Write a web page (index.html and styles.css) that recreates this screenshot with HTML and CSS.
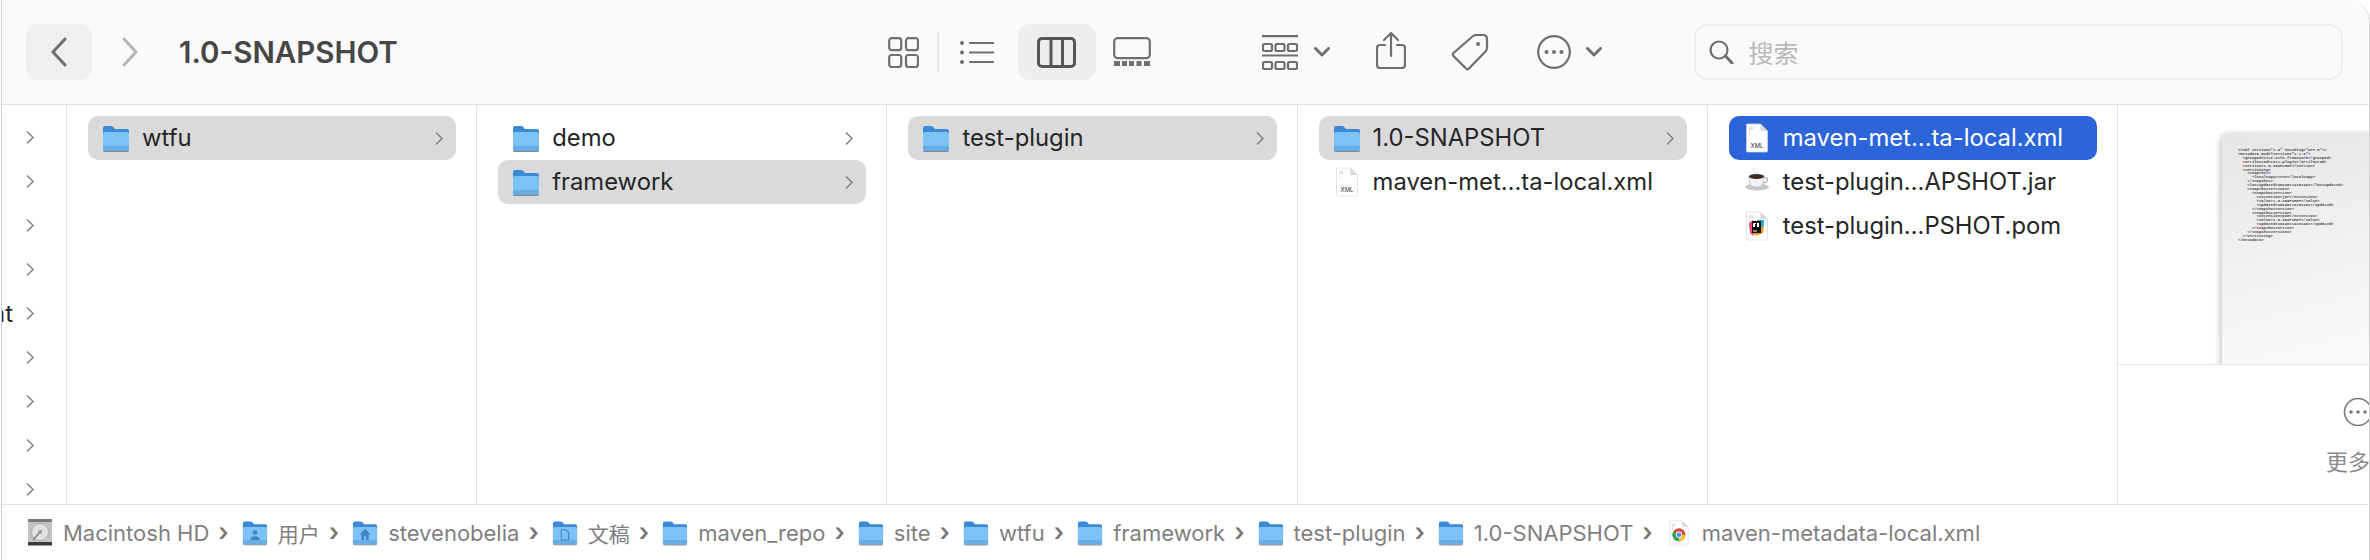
FILE: index.html
```html
<html>
  <head>
    <title>1.0-SNAPSHOT</title>
    <meta charset="UTF-8" />
    <link rel="stylesheet" href="styles.css">
  </head>
  <body>
    <svg class="sprite" width="0" height="0">
      <symbol id="folder" viewBox="0 0 28 27">
        <path d="M1 24V3q0-2 2-2h6q1.500 0 2.500 1.200l1.500 1.800h12q2 0 2 2v18z" fill="#3c8ad6"/>
        <path d="M1 9q0-2 2-2h22q2 0 2 2v15q0 2-2 2H3q-2 0-2-2z" fill="#7cc2f7"/>
        <path d="M1 21h26v3q0 2-2 2H3q-2 0-2-2z" fill="#68aee6"/>
        <path d="M3 26h22q2 0 2-1v1q0 1-2 1H3q-2 0-2-1v-1q0 1 2 1z" fill="#7d8a96"/>
      </symbol>
      <symbol id="page" viewBox="0 0 24 30">
        <path d="M1.500 1h14l7 7v20q0 1-1 1h-19q-1 0-1-1z" fill="#fff" stroke="#d6d6d6" stroke-width=".7"/>
        <path d="M15.500 1v7h7z" fill="#d8d8d8"/>
        <path d="M4 4h5l-1 1.500 1 1.500H5v5H4z" fill="#e4e4e4"/>
      </symbol>
    </svg>

    <div class="window">
      <div class="toolbar">
        <button class="nav-btn">
          <svg width="18" height="30" viewBox="0 0 18 30"><path d="M15 2 3 15l12 13" class="ln w3"/></svg>
        </button>
        <svg class="forward" width="18" height="30" viewBox="0 0 18 30"><path d="M3 2l12 13L3 28" class="ln w3 light"/></svg>
        <div class="title">1.0-SNAPSHOT</div>

        <svg class="t-grid" width="31" height="31" viewBox="0 0 31 31">
          <rect x="1.200" y="1.200" width="12" height="12" rx="2.500" class="ln w2"/>
          <rect x="18" y="1.200" width="12" height="12" rx="2.500" class="ln w2"/>
          <rect x="1.200" y="18" width="12" height="12" rx="2.500" class="ln w2"/>
          <rect x="18" y="18" width="12" height="12" rx="2.500" class="ln w2"/>
        </svg>
        <div class="t-sep"></div>
        <svg class="t-list" width="34" height="23" viewBox="0 0 34 23">
          <circle cx="2" cy="2" r="2" class="fl"/><circle cx="2" cy="11.500" r="2" class="fl"/><circle cx="2" cy="21" r="2" class="fl"/>
          <path d="M10 2h24M10 11.500h24M10 21h24" class="ln w2"/>
        </svg>
        <div class="t-active">
          <svg width="39" height="31" viewBox="0 0 39 31">
            <rect x="1.500" y="1.500" width="36" height="28" rx="3.500" class="ln w3 dark"/>
            <path d="M14 2v27M25.500 2v27" class="ln w3 dark"/>
          </svg>
        </div>
        <svg class="t-gallery" width="38" height="30" viewBox="0 0 38 30">
          <rect x="1.200" y="1.200" width="35.600" height="20" rx="3.500" class="ln w2"/>
          <path d="M1 24h6v5H1zM9 24h5v5H9zM16 24h5v5h-5zM23.500 24h5v5h-5zM31 24h6v5h-6z" class="fl"/>
        </svg>
        <svg class="t-group" width="36" height="35" viewBox="0 0 36 35">
          <path d="M0 1.200h36M0 20.500h36" class="ln w2"/>
          <rect x="1" y="9" width="9" height="7" rx="1.500" class="ln w2"/><rect x="13.500" y="9" width="9" height="7" rx="1.500" class="ln w2"/><rect x="26" y="9" width="9" height="7" rx="1.500" class="ln w2"/>
          <rect x="1" y="27" width="9" height="7" rx="1.500" class="ln w2"/><rect x="13.500" y="27" width="9" height="7" rx="1.500" class="ln w2"/><rect x="26" y="27" width="9" height="7" rx="1.500" class="ln w2"/>
        </svg>
        <svg class="t-caret" width="16" height="10" viewBox="0 0 16 10"><path d="M1.500 1.500 8 8l6.500-6.500" class="ln w3"/></svg>
        <svg class="t-share" width="30" height="37" viewBox="0 0 30 37">
          <path d="M9 13H4q-3 0-3 3v17q0 3 3 3h22q3 0 3-3V16q0-3-3-3h-5" class="ln w2"/>
          <path d="M15 24V1.500M8 8l7-7 7 7" class="ln w2"/>
        </svg>
        <svg class="t-tag" width="38" height="38" viewBox="0 0 38 38">
          <path d="M25 2h7q4 0 4 4v9q0 2-1.500 3.500L18 35.500q-1.500 1.500-3 0L2.500 23q-1.500-1.500 0-3L22 3q1.300-1 3-1z" class="ln w2"/>
          <circle cx="27" cy="11" r="2" class="fl"/>
        </svg>
        <svg class="t-more" width="34" height="34" viewBox="0 0 34 34">
          <circle cx="17" cy="17" r="15.800" class="ln w2"/>
          <circle cx="9.500" cy="17" r="2" class="fl"/><circle cx="17" cy="17" r="2" class="fl"/><circle cx="24.500" cy="17" r="2" class="fl"/>
        </svg>
        <svg class="t-caret t-caret2" width="16" height="10" viewBox="0 0 16 10"><path d="M1.500 1.500 8 8l6.500-6.500" class="ln w3"/></svg>

        <div class="search">
          <svg width="27" height="24" viewBox="0 0 27 24"><circle cx="10" cy="10" r="8.500" class="ln w2"/><path d="M16.500 16 23 23" class="ln w3"/></svg>
          <span>搜索</span>
        </div>
      </div>

      <div class="browser">
        <div class="col-side">
          <div class="side-row"><svg class="chev" width="8" height="13" viewBox="0 0 8 13"><path d="M1 .5 7 6.500 1 12.500"/></svg></div>
          <div class="side-row"><svg class="chev" width="8" height="13" viewBox="0 0 8 13"><path d="M1 .5 7 6.500 1 12.500"/></svg></div>
          <div class="side-row"><svg class="chev" width="8" height="13" viewBox="0 0 8 13"><path d="M1 .5 7 6.500 1 12.500"/></svg></div>
          <div class="side-row"><svg class="chev" width="8" height="13" viewBox="0 0 8 13"><path d="M1 .5 7 6.500 1 12.500"/></svg></div>
          <div class="side-row"><span class="side-label">nt</span><svg class="chev" width="8" height="13" viewBox="0 0 8 13"><path d="M1 .5 7 6.500 1 12.500"/></svg></div>
          <div class="side-row"><svg class="chev" width="8" height="13" viewBox="0 0 8 13"><path d="M1 .5 7 6.500 1 12.500"/></svg></div>
          <div class="side-row"><svg class="chev" width="8" height="13" viewBox="0 0 8 13"><path d="M1 .5 7 6.500 1 12.500"/></svg></div>
          <div class="side-row"><svg class="chev" width="8" height="13" viewBox="0 0 8 13"><path d="M1 .5 7 6.500 1 12.500"/></svg></div>
          <div class="side-row"><svg class="chev" width="8" height="13" viewBox="0 0 8 13"><path d="M1 .5 7 6.500 1 12.500"/></svg></div>
        </div>

        <div class="col">
          <div class="row sel">
            <svg class="ic-folder"><use href="#folder"/></svg>
            <span class="name">wtfu</span>
            <svg class="chev" width="8" height="13" viewBox="0 0 8 13"><path d="M1 .5 7 6.500 1 12.500"/></svg>
          </div>
        </div>

        <div class="col">
          <div class="row">
            <svg class="ic-folder"><use href="#folder"/></svg>
            <span class="name">demo</span>
            <svg class="chev" width="8" height="13" viewBox="0 0 8 13"><path d="M1 .5 7 6.500 1 12.500"/></svg>
          </div>
          <div class="row sel">
            <svg class="ic-folder"><use href="#folder"/></svg>
            <span class="name">framework</span>
            <svg class="chev" width="8" height="13" viewBox="0 0 8 13"><path d="M1 .5 7 6.500 1 12.500"/></svg>
          </div>
        </div>

        <div class="col">
          <div class="row sel">
            <svg class="ic-folder"><use href="#folder"/></svg>
            <span class="name">test-plugin</span>
            <svg class="chev" width="8" height="13" viewBox="0 0 8 13"><path d="M1 .5 7 6.500 1 12.500"/></svg>
          </div>
        </div>

        <div class="col">
          <div class="row sel">
            <svg class="ic-folder"><use href="#folder"/></svg>
            <span class="name">1.0-SNAPSHOT</span>
            <svg class="chev" width="8" height="13" viewBox="0 0 8 13"><path d="M1 .5 7 6.500 1 12.500"/></svg>
          </div>
          <div class="row">
            <svg class="ic-file" viewBox="0 0 24 30">
              <use href="#page"/>
              <text x="12" y="25" class="xml-label">XML</text>
            </svg>
            <span class="name">maven-met…ta-local.xml</span>
          </div>
        </div>

        <div class="col">
          <div class="row active">
            <svg class="ic-file" viewBox="0 0 24 30">
              <use href="#page"/>
              <text x="12" y="25" class="xml-label">XML</text>
            </svg>
            <span class="name">maven-met…ta-local.xml</span>
          </div>
          <div class="row">
            <svg class="ic-file" viewBox="0 0 24 30">
              <path d="M9 1q-2 1.500 0 3t0 3M12 0q-2 1.500 0 3t0 3" fill="none" stroke="#ddd" stroke-width="1"/>
              <ellipse cx="12" cy="20" rx="12" ry="3.500" fill="#c9c9c9"/>
              <path d="M4 9h15q0 8-3 10.500-3.500 1.500-9 0Q4 17 4 9z" fill="#f2f2f2" stroke="#999" stroke-width=".5"/>
              <ellipse cx="11.500" cy="9.500" rx="7.500" ry="2.500" fill="#3d2a1c"/>
              <path d="M18.500 11q4-1 4 1.500t-4.500 3.500" fill="none" stroke="#aaa" stroke-width="1.200"/>
            </svg>
            <span class="name">test-plugin…APSHOT.jar</span>
          </div>
          <div class="row">
            <svg class="ic-file" viewBox="0 0 24 30">
              <use href="#page"/>
              <path d="M4 12l4-3 3 9-3 7-3-3z" fill="#f0447f"/>
              <path d="M12 9h7v7l-5 4z" fill="#27a9e6"/>
              <path d="M6 19l5 6 7-3 1-6-9-2z" fill="#f79a24"/>
              <rect x="7" y="10" width="9" height="12" fill="#111"/>
              <rect x="8" y="19.500" width="4" height="1" fill="#fff"/>
              <path d="M8 12h3v1h-1v3H8zM12 12h2v4h-2z" fill="#fff"/>
            </svg>
            <span class="name">test-plugin…PSHOT.pom</span>
          </div>
        </div>

        <div class="preview">
          <div class="pv-top">
            <div class="thumb">
<pre>&lt;?xml version="1.0" encoding="UTF-8"?&gt;
&lt;metadata modelVersion="1.1.0"&gt;
  &lt;groupId&gt;site.wtfu.framework&lt;/groupId&gt;
  &lt;artifactId&gt;test-plugin&lt;/artifactId&gt;
  &lt;version&gt;1.0-SNAPSHOT&lt;/version&gt;
  &lt;versioning&gt;
    &lt;snapshot&gt;
      &lt;localCopy&gt;true&lt;/localCopy&gt;
    &lt;/snapshot&gt;
    &lt;lastUpdated&gt;20240112181401&lt;/lastUpdated&gt;
    &lt;snapshotVersions&gt;
      &lt;snapshotVersion&gt;
        &lt;extension&gt;jar&lt;/extension&gt;
        &lt;value&gt;1.0-SNAPSHOT&lt;/value&gt;
        &lt;updated&gt;20240112181401&lt;/updated&gt;
      &lt;/snapshotVersion&gt;
      &lt;snapshotVersion&gt;
        &lt;extension&gt;pom&lt;/extension&gt;
        &lt;value&gt;1.0-SNAPSHOT&lt;/value&gt;
        &lt;updated&gt;20240112181401&lt;/updated&gt;
      &lt;/snapshotVersion&gt;
    &lt;/snapshotVersions&gt;
  &lt;/versioning&gt;
&lt;/metadata&gt;</pre>
            </div>
          </div>
          <div class="pv-bottom">
            <svg class="pv-more" width="30" height="30" viewBox="0 0 30 30">
              <circle cx="15" cy="15" r="13.500" fill="none" stroke="#7a7a7a" stroke-width="1.600"/>
              <circle cx="8" cy="15" r="1.800" fill="#7a7a7a"/><circle cx="15" cy="15" r="1.800" fill="#7a7a7a"/><circle cx="22" cy="15" r="1.800" fill="#7a7a7a"/>
            </svg>
            <span class="pv-label">更多</span>
          </div>
        </div>
      </div>

      <div class="pathbar">
        <svg class="ic-hd" viewBox="0 0 26 27">
          <rect x="1" y="0" width="24" height="26" rx="2" fill="#c4c4c4"/>
          <rect x="1" y="0" width="24" height="3" fill="#777"/>
          <rect x="1" y="23" width="24" height="3.500" fill="#3c3c3c"/>
          <circle cx="13" cy="13" r="8.500" fill="#e2e2e2" stroke="#999" stroke-width=".6"/>
          <path d="M6 21 15 11" stroke="#777" stroke-width="1.200"/>
          <circle cx="13" cy="13" r="2" fill="#999"/>
        </svg>
        <span class="crumb">Macintosh HD</span><span class="sep">›</span>

        <svg class="ic-crumb" viewBox="0 0 28 27">
          <use href="#folder"/>
          <circle cx="14" cy="13" r="2.500" fill="#3f86c9"/><path d="M9 21q0-4 5-4t5 4z" fill="#3f86c9"/>
        </svg>
        <span class="crumb cjk">用户</span><span class="sep">›</span>

        <svg class="ic-crumb" viewBox="0 0 28 27">
          <use href="#folder"/>
          <path d="M14 9l-6 6h2v6h3v-4h2v4h3v-6h2z" fill="#3f86c9"/>
        </svg>
        <span class="crumb">stevenobelia</span><span class="sep">›</span>

        <svg class="ic-crumb" viewBox="0 0 28 27">
          <use href="#folder"/>
          <path d="M10 10h5l3 3v8h-8z" fill="none" stroke="#3f86c9" stroke-width="1.200"/>
        </svg>
        <span class="crumb cjk">文稿</span><span class="sep">›</span>

        <svg class="ic-crumb"><use href="#folder"/></svg>
        <span class="crumb">maven_repo</span><span class="sep">›</span>
        <svg class="ic-crumb"><use href="#folder"/></svg>
        <span class="crumb">site</span><span class="sep">›</span>
        <svg class="ic-crumb"><use href="#folder"/></svg>
        <span class="crumb">wtfu</span><span class="sep">›</span>
        <svg class="ic-crumb"><use href="#folder"/></svg>
        <span class="crumb">framework</span><span class="sep">›</span>
        <svg class="ic-crumb"><use href="#folder"/></svg>
        <span class="crumb">test-plugin</span><span class="sep">›</span>
        <svg class="ic-crumb"><use href="#folder"/></svg>
        <span class="crumb">1.0-SNAPSHOT</span><span class="sep">›</span>

        <svg class="ic-crumb" viewBox="0 0 24 30">
          <use href="#page"/>
          <circle cx="12" cy="17" r="7.500" fill="#dd4b3e"/>
          <path d="M12 17 5.500 13.200A7.500 7.500 0 0 0 12 24.500z" fill="#2fa853"/>
          <path d="M12 17v7.500A7.500 7.500 0 0 0 19.500 17z" fill="#f6c42d"/>
          <circle cx="12" cy="17" r="3.600" fill="#fff"/>
          <circle cx="12" cy="17" r="2.700" fill="#4a89e8"/>
        </svg>
        <span class="crumb">maven-metadata-local.xml</span>
      </div>
    </div>
  </body>
</html>
```

FILE: styles.css
```css
html,
body {
  margin: 0;
  background-color: #fff;
}

body {
  font-family: Inter, "Noto Sans CJK SC", sans-serif;
  color: #262626;
  overflow: hidden;
}

.sprite {
  display: block;
  height: 0;
}

.window {
  box-sizing: border-box;
  width: 2369px;
  height: 560px;
  margin-left: 1px;
  border-left: 1.5px solid #cfcfcf;
  border-right: 1.5px solid #cfcfcf;
  border-top-right-radius: 22px;
  overflow: hidden;
  display: flex;
  flex-direction: column;
}

/* toolbar */
.toolbar {
  flex: 0 0 105px;
  box-sizing: border-box;
  display: flex;
  align-items: center;
  padding-left: 24px;
  background-color: #fafafa;
  border-bottom: 1.5px solid #e0e0e0;
}

.ln {
  fill: none;
  stroke: #6f6f6f;
  stroke-linecap: round;
  stroke-linejoin: round;
}
.w2 {
  stroke-width: 2.2;
}
.w3 {
  stroke-width: 3;
}
.light {
  stroke: #b5b5b5;
}
.dark {
  stroke: #555;
}
.fl {
  fill: #6f6f6f;
}

.nav-btn {
  width: 66px;
  height: 56px;
  padding: 0;
  border: 0;
  border-radius: 12px;
  background-color: #efefef;
  display: flex;
  align-items: center;
  justify-content: center;
}

.forward {
  margin-left: 29px;
}

.title {
  width: 220px;
  margin-left: 40px;
  font-size: 29.500px;
  font-weight: 600;
  color: #464646;
  white-space: nowrap;
}

.t-grid {
  margin-left: 489px;
}
.t-sep {
  width: 1.5px;
  height: 40px;
  margin-left: 18px;
  background-color: #e6e6e6;
}
.t-list {
  margin-left: 21px;
}
.t-active {
  width: 78px;
  height: 56px;
  margin-left: 24px;
  border-radius: 12px;
  background-color: #eeeeee;
  display: flex;
  align-items: center;
  justify-content: center;
}
.t-gallery {
  margin-left: 17px;
}
.t-group {
  margin-left: 111px;
}
.t-caret {
  margin-left: 16px;
  margin-top: 0;
}
.t-share {
  margin-left: 46px;
  margin-top: -4px;
}
.t-tag {
  margin-left: 45px;
  margin-top: -1px;
}
.t-more {
  margin-left: 48px;
}
.t-caret2 {
  margin-left: 15px;
}

.search {
  box-sizing: border-box;
  width: 649px;
  height: 56px;
  margin-left: 92px;
  padding-left: 13px;
  border: 2px solid #eeeeee;
  border-radius: 13px;
  background-color: #f9f9f9;
  display: flex;
  align-items: center;
  gap: 13px;
  font-size: 25px;
  color: #b9b9b9;
  font-family: "Noto Sans CJK SC", sans-serif;
}

/* column browser */
.browser {
  flex: 0 0 399px;
  min-height: 0;
  display: flex;
  background-color: #fff;
  overflow: hidden;
}

.col-side {
  box-sizing: border-box;
  flex: 0 0 65px;
  padding-top: 10px;
  border-right: 1.5px solid #e4e4e4;
  overflow: hidden;
}

.side-row {
  height: 44px;
  padding-right: 32px;
  display: flex;
  align-items: center;
  justify-content: flex-end;
}

.side-label {
  flex: none;
  margin-right: 13px;
  font-size: 24px;
}

.col {
  box-sizing: border-box;
  flex: 0 0 410.200px;
  padding: 11px 20px 0 21px;
  border-right: 1.5px solid #e4e4e4;
}

.row {
  height: 44px;
  padding-left: 14px;
  padding-right: 13px;
  border-radius: 10px;
  display: flex;
  align-items: center;
}

.row.sel {
  background-color: #dadada;
}

.row.active {
  background-color: #2b65d9;
  color: #fff;
}

.name {
  flex: 1;
  margin-left: 12px;
  margin-bottom: 2px;
  font-size: 23.800px;
  white-space: nowrap;
}

.ic-folder {
  width: 28px;
  height: 27px;
  flex: none;
}

.ic-file {
  width: 24px;
  height: 30px;
  flex: none;
  margin-left: 2px;
  margin-right: 2px;
}

.xml-label {
  font-family: Inter, sans-serif;
  font-size: 6px;
  text-anchor: middle;
  fill: #333;
}

.chev {
  flex: none;
  fill: none;
  stroke: #7c7c7c;
  stroke-width: 1.400;
}

/* preview pane */
.preview {
  flex: 1;
  display: flex;
  flex-direction: column;
  overflow: hidden;
}

.pv-top {
  flex: 0 0 260px;
  box-sizing: border-box;
  padding: 28px 0 0 104px;
  border-bottom: 1.5px solid #e4e4e4;
  overflow: hidden;
}

.thumb {
  box-sizing: border-box;
  width: 200px;
  height: 240px;
  padding: 16px 0 0 16px;
  border-top-left-radius: 10px;
  background: linear-gradient(165deg, #e6e6e6 0%, #f6f6f6 70%, #fbfbfb 100%);
  box-shadow: -3px 0 5px rgba(0, 0, 0, 0.18);
}

.thumb pre {
  margin: 0;
  font-family: "Liberation Mono", monospace;
  font-size: 3.900px;
  line-height: 3.900px;
  font-weight: bold;
  color: #4a4a4a;
}

.pv-bottom {
  flex: 1;
  padding: 32px 0 0 208px;
  display: flex;
  flex-direction: column;
}

.pv-more {
  margin-left: 17px;
}

.pv-label {
  margin-top: 17px;
  font-size: 22px;
  color: #8a8a8a;
  white-space: nowrap;
  font-family: "Noto Sans CJK SC", sans-serif;
}

/* path bar */
.pathbar {
  flex: 1;
  display: flex;
  align-items: center;
  padding-left: 25px;
  border-top: 1.5px solid #e4e4e4;
  font-size: 22px;
  color: #7f7f7f;
  background-color: #fff;
}

.ic-hd {
  width: 26px;
  height: 27px;
  flex: none;
  margin-right: 10px;
}

.ic-crumb {
  width: 26px;
  height: 26px;
  flex: none;
  margin-right: 10px;
}

.crumb {
  white-space: nowrap;
}

.cjk {
  font-family: "Noto Sans CJK SC", sans-serif;
  font-size: 21px;
}

.sep {
  margin: 0 13px 2px 9px;
  font-size: 25px;
  font-weight: 600;
  color: #777;
}
```
